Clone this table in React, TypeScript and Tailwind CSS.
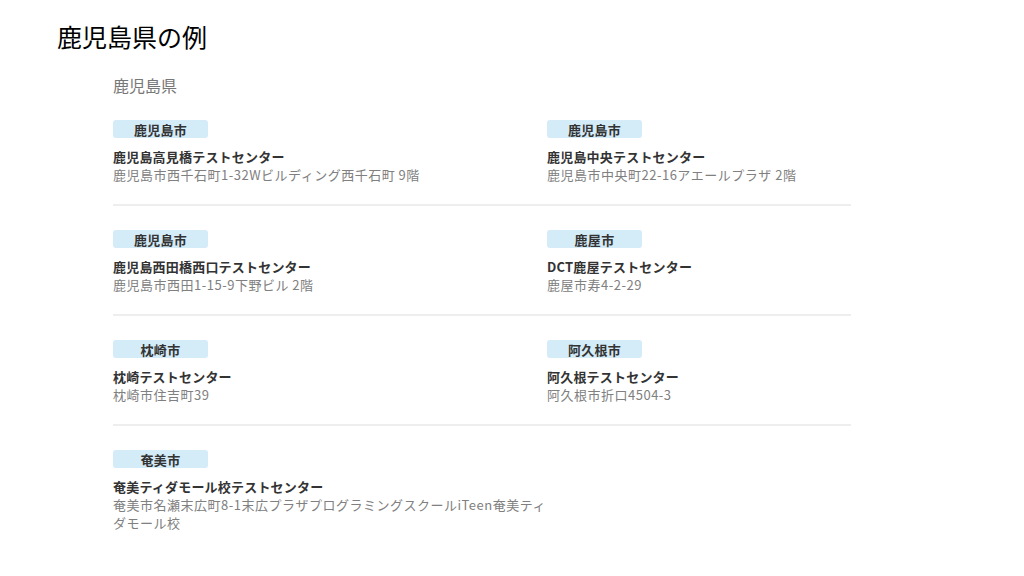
import React from "react";

type Item = { city: string; name: string; addr: string };

const rows: Item[][] = [
  [
    { city: "鹿児島市", name: "鹿児島高見橋テストセンター", addr: "鹿児島市西千石町1-32Wビルディング西千石町 9階" },
    { city: "鹿児島市", name: "鹿児島中央テストセンター", addr: "鹿児島市中央町22-16アエールプラザ 2階" },
  ],
  [
    { city: "鹿児島市", name: "鹿児島西田橋西口テストセンター", addr: "鹿児島市西田1-15-9下野ビル 2階" },
    { city: "鹿屋市", name: "DCT鹿屋テストセンター", addr: "鹿屋市寿4-2-29" },
  ],
  [
    { city: "枕崎市", name: "枕崎テストセンター", addr: "枕崎市住吉町39" },
    { city: "阿久根市", name: "阿久根テストセンター", addr: "阿久根市折口4504-3" },
  ],
  [
    { city: "奄美市", name: "奄美ティダモール校テストセンター", addr: "奄美市名瀬末広町8-1末広プラザプログラミングスクールiTeen奄美ティダモール校" },
  ],
];

function Cell({ item }: { item: Item }) {
  return (
    <div className="flex flex-col items-start">
      <div className="w-[95px] h-[18px] rounded-[3px] bg-[#d4ebf8] flex items-center justify-center text-[13px] font-semibold tracking-[0.3px] text-[#333] leading-none">
        {item.city}
      </div>
      <div className="mt-[10px] text-[13px] leading-[18px] font-bold tracking-[0.2px] text-[#333]">{item.name}</div>
      <div className="self-stretch mr-[-8px] text-[13px] leading-[18px] tracking-[0.5px] text-[#808080]">{item.addr}</div>
    </div>
  );
}

export default function App() {
  return (
    <div
      className="w-[1024px] h-[576px] bg-white overflow-hidden"
      style={{ fontFamily: '"Noto Sans CJK JP", "Noto Sans", sans-serif' }}
    >
      <div className="pl-[57px] pt-[18px] text-[25px] leading-[36px] text-black">鹿児島県の例</div>
      <div className="pl-[113px] w-[851px]">
        <div className="mt-[19px] text-[16px] leading-[24px] text-[#777]">鹿児島県</div>
        <div className="mt-[23px] flex flex-col">
          {rows.map((r, i) => (
            <div key={i} className={i < rows.length - 1 ? "border-b-2 border-[#eeeeee] pb-[20px] mb-[24px]" : ""}>
              <div className="grid grid-cols-[434px_304px]">
                {r.map((it, j) => (
                  <Cell key={j} item={it} />
                ))}
              </div>
            </div>
          ))}
        </div>
      </div>
    </div>
  );
}
